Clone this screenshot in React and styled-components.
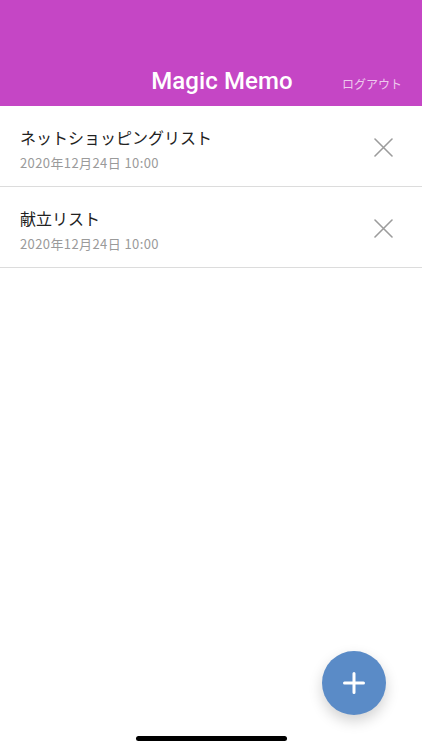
import React from "react";
import styled, { createGlobalStyle } from "styled-components";

const Global = createGlobalStyle`
  html, body { margin: 0; padding: 0; background: #fff; }
  * { box-sizing: border-box; }
`;

const Screen = styled.div`
  width: 422px;
  height: 750px;
  display: flex;
  flex-direction: column;
  position: relative;
  overflow: hidden;
  background: #fff;
  font-family: "Noto Sans CJK JP", "Noto Sans", sans-serif;
`;

const Header = styled.header`
  height: 106px;
  background: #c546c5;
  display: grid;
  grid-template-columns: 1fr auto 1fr;
  align-items: end;
  padding: 0 20px 10px 42px;
`;

const Title = styled.h1`
  grid-column: 2;
  margin: 0;
  color: #fff;
  font-family: Roboto, "Noto Sans", sans-serif;
  font-weight: 500;
  font-size: 24px;
  line-height: 30px;
  letter-spacing: 0.1px;
`;

const Logout = styled.button`
  grid-column: 3;
  justify-self: end;
  border: 0;
  background: none;
  padding: 0;
  margin-bottom: 4px;
  color: rgba(255, 255, 255, 0.72);
  font-family: "Noto Sans CJK JP", sans-serif;
  font-size: 12px;
  line-height: 16px;
`;

const List = styled.ul`
  list-style: none;
  margin: 0;
  padding: 0;
`;

const Row = styled.li`
  height: 81px;
  display: flex;
  align-items: flex-start;
  justify-content: space-between;
  padding: 20px 28px 0 20px;
  border-bottom: 1.5px solid #dcdcdc;
`;

const Texts = styled.div`
  display: flex;
  flex-direction: column;
  gap: 6px;
`;

const MemoTitle = styled.div`
  font-size: 16px;
  line-height: 22px;
  color: #222;
`;

const MemoDate = styled.div`
  font-size: 13px;
  line-height: 18px;
  letter-spacing: 0.4px;
  color: #9a9a9a;
`;

const Remove = styled.button`
  border: 0;
  background: none;
  padding: 0;
  margin-top: 11px;
  margin-right: 1px;
  width: 20px;
  height: 20px;
  display: flex;
  align-items: center;
  justify-content: center;
`;

const Fab = styled.button`
  position: absolute;
  right: 36px;
  bottom: 35px;
  width: 64px;
  height: 64px;
  border-radius: 50%;
  border: 0;
  background: #5a8bc7;
  box-shadow: 0 6px 14px rgba(0, 0, 0, 0.18);
  display: flex;
  align-items: center;
  justify-content: center;
`;

const HomeBar = styled.div`
  position: absolute;
  left: 136px;
  bottom: 9px;
  width: 151px;
  height: 5px;
  border-radius: 3px;
  background: #000;
`;

const CloseIcon = () => (
  <svg width="19" height="19" viewBox="0 0 19 19">
    <path d="M1 1 L18 18 M18 1 L1 18" stroke="#9c9c9c" strokeWidth="1.6" strokeLinecap="round" />
  </svg>
);

const PlusIcon = () => (
  <svg width="22" height="22" viewBox="0 0 22 22">
    <path d="M11 1.5 V20.5 M1.5 11 H20.5" stroke="#fff" strokeWidth="3" strokeLinecap="round" />
  </svg>
);

const memos = [
  { title: "ネットショッピングリスト", date: "2020年12月24日 10:00" },
  { title: "献立リスト", date: "2020年12月24日 10:00" },
];

export default function App() {
  return (
    <>
      <Global />
      <Screen>
        <Header>
          <Title>Magic Memo</Title>
          <Logout>ログアウト</Logout>
        </Header>
        <List>
          {memos.map((m) => (
            <Row key={m.title}>
              <Texts>
                <MemoTitle>{m.title}</MemoTitle>
                <MemoDate>{m.date}</MemoDate>
              </Texts>
              <Remove aria-label="削除">
                <CloseIcon />
              </Remove>
            </Row>
          ))}
        </List>
        <Fab aria-label="追加">
          <PlusIcon />
        </Fab>
        <HomeBar />
      </Screen>
    </>
  );
}
